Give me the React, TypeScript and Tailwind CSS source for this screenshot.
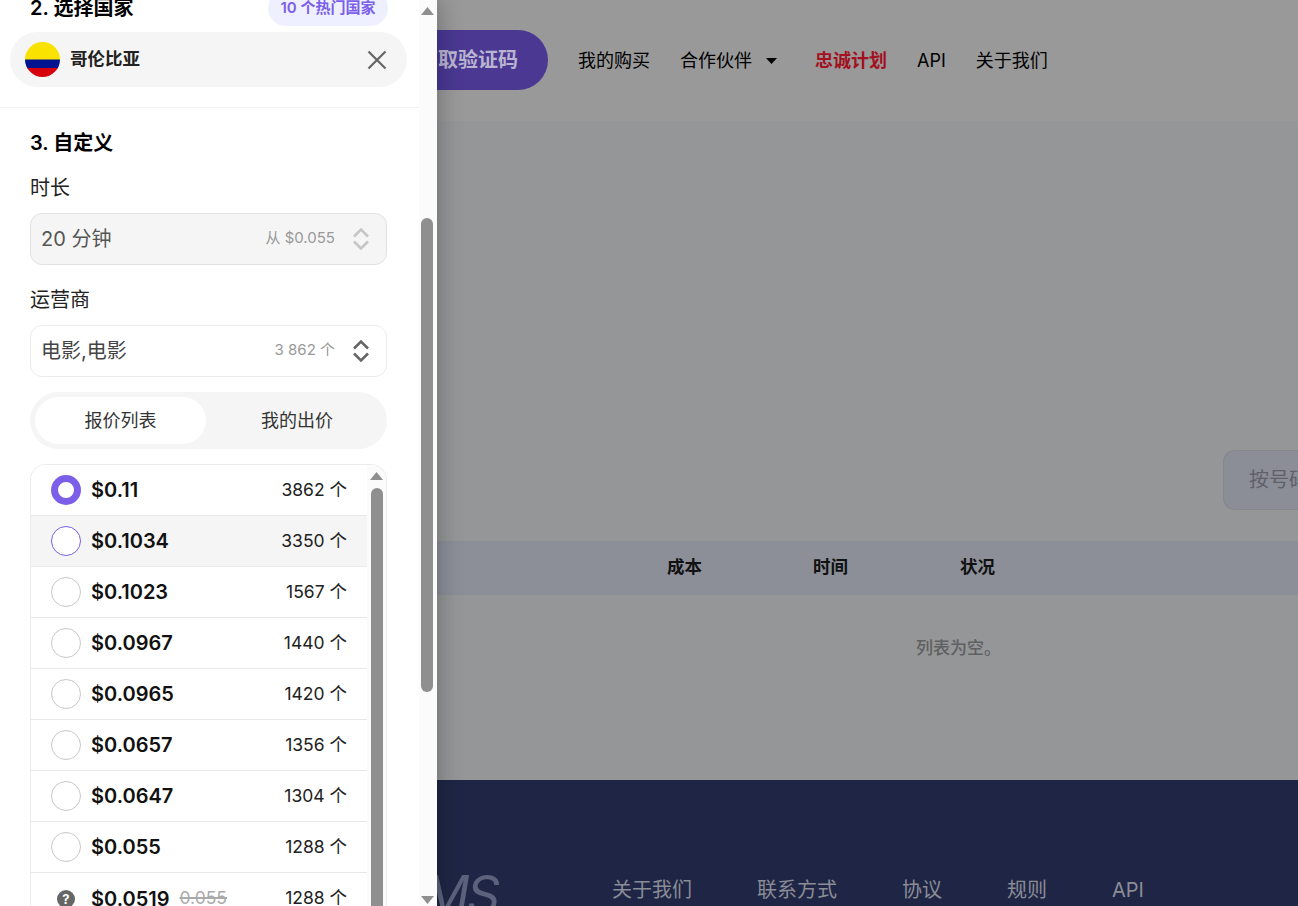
const offers = [
  { price: "$0.11", count: "3862 个", state: "checked" },
  { price: "$0.1034", count: "3350 个", state: "hover" },
  { price: "$0.1023", count: "1567 个", state: "" },
  { price: "$0.0967", count: "1440 个", state: "" },
  { price: "$0.0965", count: "1420 个", state: "" },
  { price: "$0.0657", count: "1356 个", state: "" },
  { price: "$0.0647", count: "1304 个", state: "" },
  { price: "$0.055", count: "1288 个", state: "" },
  { price: "$0.0519", old: "0.055", count: "1288 个", state: "unknown" },
];

function Chevrons({ color }: { color: string }) {
  return (
    <svg width="18" height="24" viewBox="0 0 18 24" fill="none" stroke={color} strokeWidth="2.6">
      <path d="M2 9.5 9 2.5l7 7" />
      <path d="M2 14.5l7 7 7-7" />
    </svg>
  );
}

function Radio({ state }: { state: string }) {
  if (state === "checked") {
    return <span className="w-[30px] h-[30px] rounded-full border-[7px] border-[#7b5fe9] bg-white shrink-0" />;
  }
  if (state === "hover") {
    return <span className="w-[30px] h-[30px] rounded-full border border-[#7b5fe9] bg-white shrink-0" />;
  }
  if (state === "unknown") {
    return (
      <span className="w-[30px] h-[30px] flex items-center justify-center shrink-0">
        <span className="w-[18px] h-[18px] rounded-full bg-[#666] text-white text-[13px] leading-[18px] text-center font-bold">?</span>
      </span>
    );
  }
  return <span className="w-[30px] h-[30px] rounded-full border border-[#c8c8c8] bg-white shrink-0" />;
}

function Arrow({ down, className }: { down?: boolean; className?: string }) {
  return (
    <svg width="13" height="8" viewBox="0 0 13 8" className={className} fill="#8f8f8f">
      <path d={down ? "M0 0h13L6.5 8z" : "M0 8h13L6.5 0z"} />
    </svg>
  );
}

function Drawer() {
  return (
    <aside className="absolute left-0 top-0 h-[906px] w-[437px] flex bg-white overflow-hidden shadow-[0_0_24px_rgba(0,0,0,0.3)] text-[#222]">
      <div className="w-[419px] shrink-0">
        <div className="pl-[30px] pr-[31px] h-[36px] -mt-[10px] flex items-center justify-between">
          <h2 className="text-[20px] font-semibold text-black">2. 选择国家</h2>
          <span className="h-[36px] w-[120px] rounded-full bg-[#eef0ff] text-[#7b5fe9] text-[15px] font-semibold flex items-center justify-center whitespace-nowrap">10 个热门国家</span>
        </div>
        <div className="ml-[10px] w-[397px] mt-[6px] h-[55px] rounded-full bg-[#f5f5f5] flex items-center pl-[15px] pr-[20px]">
          <svg width="35" height="35" viewBox="0 0 35 35" className="shrink-0">
            <clipPath id="flag"><circle cx="17.5" cy="17.5" r="17.5" /></clipPath>
            <g clipPath="url(#flag)">
              <rect width="35" height="18" fill="#f9e100" />
              <rect y="17.5" width="35" height="9" fill="#00148f" />
              <rect y="26" width="35" height="9" fill="#d6000f" />
            </g>
          </svg>
          <span className="ml-[10px] text-[17.5px] font-semibold flex-1">哥伦比亚</span>
          <svg width="20" height="20" viewBox="0 0 20 20" stroke="#666" strokeWidth="2.2"><path d="M1.5 1.5l17 17M18.5 1.5l-17 17" /></svg>
        </div>
        <div className="mt-[20px] border-t border-[#f2f2f2]" />
        <div className="px-[30px] pr-[32px]">
          <h2 className="mt-[21px] text-[20px] leading-[28px] font-semibold text-black">3. 自定义</h2>
          <div className="mt-[16px] text-[20px] leading-[30px]">时长</div>
          <div className="mt-[10px] h-[52px] rounded-[12px] border border-[#e2e2e2] bg-[#f5f5f5] flex items-center pl-[10px] pr-[16px]">
            <span className="text-[20px] text-[#555] flex-1">20 分钟</span>
            <span className="text-[15px] text-[#999] mr-[17px] -mt-[1px]">从 $0.055</span>
            <Chevrons color="#c6c6c6" />
          </div>
          <div className="mt-[20px] text-[20px] leading-[30px]">运营商</div>
          <div className="mt-[10px] h-[52px] rounded-[12px] border border-[#ececec] bg-white flex items-center pl-[10px] pr-[16px]">
            <span className="text-[20px] text-[#444] flex-1">电影,电影</span>
            <span className="text-[15px] text-[#999] mr-[17px] -mt-[1px]">3 862 个</span>
            <Chevrons color="#666" />
          </div>
          <div className="mt-[15px] h-[57px] rounded-full bg-[#f5f5f5] p-[5px] flex text-[18px] text-[#333]">
            <div className="w-[171px] rounded-full bg-white flex items-center justify-center">报价列表</div>
            <div className="flex-1 pl-[6px] flex items-center justify-center">我的出价</div>
          </div>
          <div className="mt-[15px] w-[357px] flex border border-[#ececec] border-b-0 rounded-t-[16px] overflow-hidden">
            <div className="flex-1 min-w-0">
              {offers.map((o, i) => (
                <div
                  key={o.price}
                  className={
                    "h-[51px] flex items-center pl-[20px] pr-[20px] " +
                    (i < offers.length - 1 ? "border-b border-[#e8e8e8] " : "") +
                    (o.state === "hover" ? "bg-[#f5f5f5]" : "bg-white")
                  }
                >
                  <Radio state={o.state} />
                  <span className="ml-[10px] text-[20px] font-semibold text-[#111]">{o.price}</span>
                  {o.old && <span className="ml-[10px] text-[17.5px] text-[#aaa] line-through decoration-2">{o.old}</span>}
                  <span className="ml-auto text-[17.5px] text-[#222]">{o.count}</span>
                </div>
              ))}
            </div>
            <div className="w-[19px] shrink-0 bg-[#fbfbfb] flex flex-col items-center pt-[7px]">
              <Arrow />
              <div className="mt-[8px] w-[12px] flex-1 rounded-t-[6px] bg-[#8f8f8f]" />
            </div>
          </div>
        </div>
      </div>
      <div className="w-[18px] shrink-0 bg-[#fbfbfb] flex flex-col items-center pt-[7px] pb-[2px] pr-[2px]">
        <Arrow />
        <div className="mt-[203px] w-[12px] h-[474px] rounded-[6px] bg-[#8f8f8f]" />
        <Arrow down className="mt-auto" />
      </div>
    </aside>
  );
}

export default function App() {
  return (
    <div className="relative h-[906px] overflow-hidden bg-[#959697] font-['Inter','Noto_Sans_CJK_SC',sans-serif]">
      <header className="h-[121px] bg-[#999999] flex items-center pl-[388px] text-[18px] text-black">
        <button className="h-[60px] w-[160px] rounded-full bg-[#4a3893] text-[#b9b4d0] text-[20px] font-bold -mt-[1px]">获取验证码</button>
        <nav className="ml-[30px] flex items-center gap-[30px]">
          <a>我的购买</a>
          <a className="flex items-center">
            合作伙伴
            <svg width="11" height="6" viewBox="0 0 11 6" className="ml-[14px]" fill="#000"><path d="M0 0h11L5.5 6z" /></svg>
            <span className="w-[8px]" />
          </a>
          <a className="font-bold text-[#a3101f]">忠诚计划</a>
          <a>API</a>
          <a>关于我们</a>
        </nav>
      </header>
      <main className="h-[659px]">
        <div className="h-[329px] pt-[329px] flex justify-end">
          <div className="h-[60px] w-[75px] rounded-l-[12px] border border-r-0 border-[#85878f] bg-[#8b8d97] text-[#5f6068] text-[20px] pl-[25px] flex items-center whitespace-nowrap overflow-hidden">按号码</div>
        </div>
        <div className="mt-[91px] h-[54px] bg-[#8c8f98] flex items-center pl-[667px] pb-[1px] text-[17.5px] font-bold text-[#111]">
          <span className="w-[146px]">成本</span>
          <span className="w-[147px]">时间</span>
          <span>状况</span>
        </div>
        <p className="mt-[41px] pl-[916px] text-[17px] leading-[24px] font-medium text-[#5f6062]">列表为空。</p>
      </main>
      <footer className="h-[126px] bg-[#1f2645] pt-[94px] pl-[437px] flex items-center text-[20px] text-[#8a8c96] overflow-hidden">
        <div className="w-[175px] shrink-0 flex justify-end pr-[115px] whitespace-nowrap">
          <span className="text-[52px] italic tracking-[-3px] mt-[10px] text-[#5c627b]">SMS</span>
        </div>
        <div className="flex gap-[65px]">
          <a>关于我们</a>
          <a>联系方式</a>
          <a>协议</a>
          <a>规则</a>
          <a>API</a>
        </div>
      </footer>
      <Drawer />
    </div>
  );
}
